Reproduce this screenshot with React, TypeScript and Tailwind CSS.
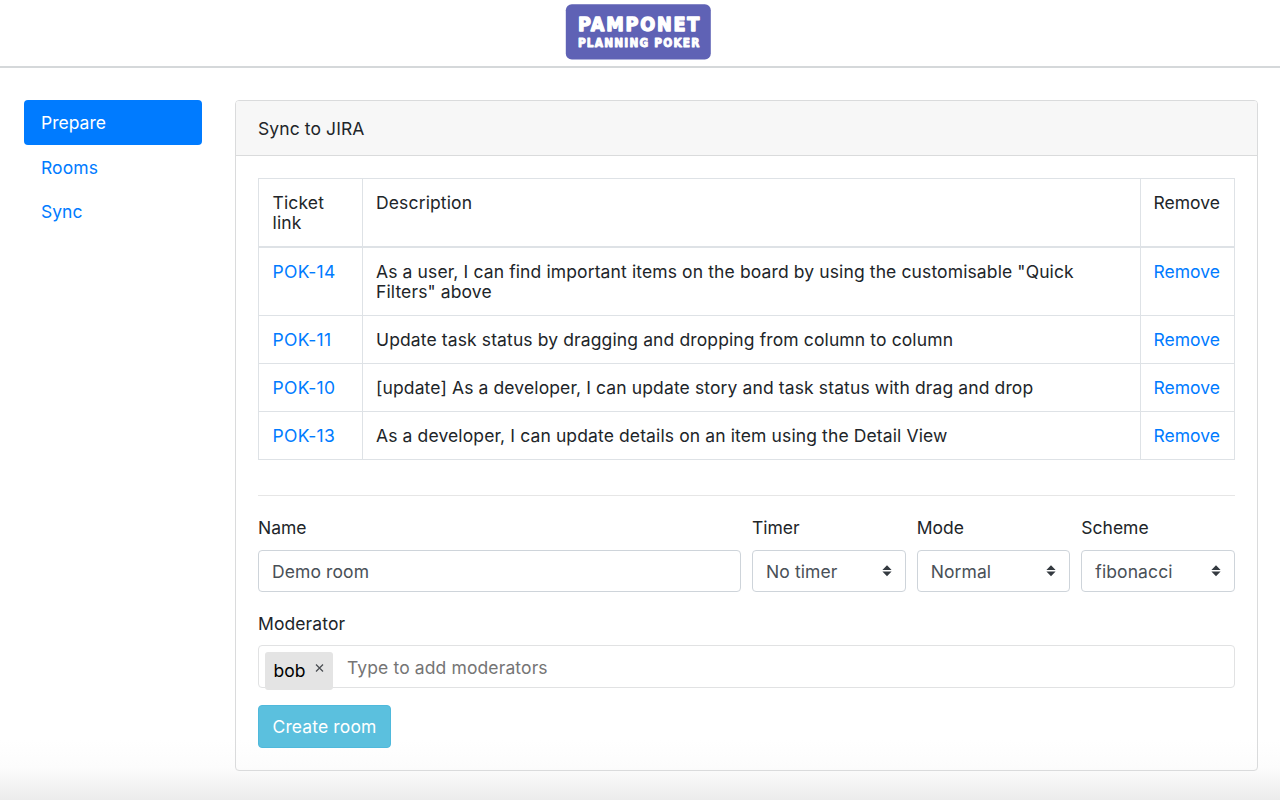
import type { ReactNode } from 'react';

const tickets = [
  { id: 'POK-14', text: 'As a user, I can find important items on the board by using the customisable "Quick Filters" above' },
  { id: 'POK-11', text: 'Update task status by dragging and dropping from column to column' },
  { id: 'POK-10', text: '[update] As a developer, I can update story and task status with drag and drop' },
  { id: 'POK-13', text: 'As a developer, I can update details on an item using the Detail View' },
];

function Logo() {
  return (
    <svg width="146" height="56" viewBox="0 0 146 56" aria-label="Pamponet Planning Poker">
      <rect x="0.8" y="0.2" width="145" height="55.4" rx="6" fill="#5f62b5" />
      <g fill="#fff" stroke="#fff" strokeLinejoin="round" fontFamily="'DejaVu Sans Condensed', 'DejaVu Sans', sans-serif" fontStretch="condensed" fontWeight="700">
        <text x="12.9" y="27" fontSize="19.6" strokeWidth="1.3" textLength="121.5" lengthAdjust="spacing">PAMPONET</text>
        <text x="12.9" y="43.2" fontSize="11.8" strokeWidth="0.9" textLength="121.5" lengthAdjust="spacing">PLANNING POKER</text>
      </g>
    </svg>
  );
}

function Select({ label, value }: { label: string; value: string }) {
  return (
    <div className="flex-1">
      <div className="h-[34px] leading-[24px]">{label}</div>
      <div className="flex h-[42px] items-center justify-between rounded-[4px] border border-[#ced4da] bg-white pr-[13px] pl-[13px] text-[#495057]">
        <span className="pt-0.5 tracking-[0.1px]">{value}</span>
        <svg width="10" height="12" viewBox="0 0 10 12" fill="#343a40">
          <path d="M5 0.3 9.6 5H.4ZM5 11.3.4 6.6h9.2Z" />
        </svg>
      </div>
    </div>
  );
}

function Link({ children }: { children: ReactNode }) {
  return <a className="text-[#007bff]">{children}</a>;
}

export default function App() {
  return (
    <div className="flex h-[800px] w-[1280px] flex-col overflow-hidden bg-[linear-gradient(to_bottom,#fff_0,#fff_740px,#fcfcfc_768px,#ececec_800px)] font-['Inter',sans-serif] text-[17.5px] text-[#212529]">
      <header className="flex h-[68px] shrink-0 justify-center border-b-2 border-[#d5d8da] bg-white pt-1 pr-[4px]">
        <Logo />
      </header>
      <div className="flex items-start pt-8 pl-6">
        <nav className="mr-[33px] flex w-[178px] flex-col text-[#007bff]">
          <a className="flex h-[45px] items-center rounded-[4px] bg-[#007bff] pt-0.5 pl-[17px] text-white">Prepare</a>
          <a className="flex h-[44px] items-center pt-0.5 pl-[17px] tracking-[0.1px]">Rooms</a>
          <a className="flex h-[45px] items-center pt-0.5 pl-[17px]">Sync</a>
        </nav>
        <section className="h-[671px] w-[1023.4px] rounded-[4px] border border-[#dadbdc]">
          <div className="flex h-[55px] items-center rounded-t-[3px] border-b border-[#dadbdc] bg-[#f7f7f7] pt-0.5 pl-[22px] tracking-[0.1px]">Sync to JIRA</div>
          <div className="px-[22px] pt-[22px]">
            <table className="w-[977px] table-fixed border-separate border-spacing-0 border-t border-l border-[#dee2e6] text-left leading-5">
              <colgroup>
                <col className="w-[104px]" />
                <col className="w-[778px]" />
                <col className="w-[94px]" />
              </colgroup>
              <thead>
                <tr className="h-[69px] align-top">
                  <th className="border-r border-b-2 border-[#dee2e6] pt-[14px] pr-[30px] pl-[13.5px] font-normal tracking-[0.15px]">Ticket link</th>
                  <th className="border-r border-b-2 border-[#dee2e6] pt-[14px] pl-[13px] font-normal tracking-[0.14px]">Description</th>
                  <th className="border-r border-b-2 border-[#dee2e6] pt-[14px] pl-[12.5px] font-normal">Remove</th>
                </tr>
              </thead>
              <tbody>
                {tickets.map((t, i) => (
                  <tr key={t.id} className={i === 0 ? 'h-[68px] align-top' : 'h-[48px] align-top'}>
                    <td className="border-r border-b border-[#dee2e6] pt-[14px] pl-[13.5px] tracking-[0.4px]"><Link>{t.id}</Link></td>
                    <td className="border-r border-b border-[#dee2e6] pt-[14px] pr-[13px] pl-[13px] tracking-[0.12px]">{t.text}</td>
                    <td className="border-r border-b border-[#dee2e6] pt-[14px] pl-[12.5px]"><Link>Remove</Link></td>
                  </tr>
                ))}
              </tbody>
            </table>
            <hr className="mt-[35px] w-[977px] border-t border-[#e6e6e6]" />
            <div className="mt-[20px] flex w-[977px] gap-[11px]">
              <div className="w-[483px] shrink-0">
                <div className="h-[34px] leading-[24px]">Name</div>
                <div className="flex h-[42px] items-center rounded-[4px] border border-[#ced4da] bg-white pt-0.5 pl-[13px] tracking-[0.1px] text-[#495057]">Demo room</div>
              </div>
              <Select label="Timer" value="No timer" />
              <Select label="Mode" value="Normal" />
              <Select label="Scheme" value="fibonacci" />
            </div>
            <div className="mt-[20px] h-[33px] leading-[24px] tracking-[0.1px]">Moderator</div>
            <div className="flex h-[43px] w-[977px] items-start rounded-[4px] border border-[#e1e2e3] bg-white pl-[6px]">
              <div className="mt-[6px] flex h-[38px] w-[68px] shrink-0 rounded-[3px] bg-[#e4e4e4] pl-[8.5px] text-black">
                <span className="leading-[38px]">bob</span>
                <svg className="mt-[12px] ml-[9.5px]" width="9" height="9" viewBox="0 0 9 9" stroke="#4b4f54" strokeWidth="1.3">
                  <path d="M1 .5 8 7.5M8 .5 1 7.5" />
                </svg>
              </div>
              <span className="ml-[14px] leading-[44px] tracking-[0.12px] text-[#757575]">Type to add moderators</span>
            </div>
            <button className="mt-[17px] flex h-[43px] w-[133px] items-center justify-center rounded-[4px] border border-[#4fb9dc] bg-[#5bc0de] pt-0.5 tracking-[0.13px] whitespace-nowrap text-white">Create room</button>
          </div>
        </section>
      </div>
    </div>
  );
}
